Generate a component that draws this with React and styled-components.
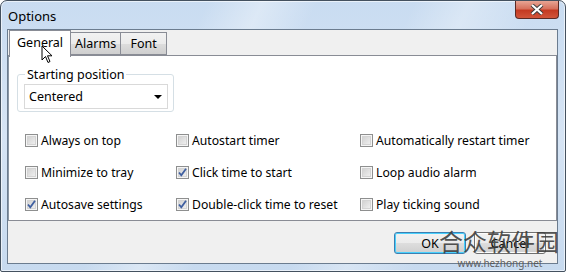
import React from "react";
import styled, { createGlobalStyle } from "styled-components";

const GlobalStyle = createGlobalStyle`
  html, body {
    margin: 0;
    padding: 0;
    background: #ffffff;
  }
  body {
    font-family: "Noto Sans", "Noto Sans CJK SC", sans-serif;
  }
`;

const Frame = styled.div`
  position: relative;
  box-sizing: border-box;
  width: 566px;
  height: 272px;
  border: 1px solid #44515f;
  border-radius: 7px 7px 2px 2px;
  background:
    linear-gradient(115deg, rgba(255,255,255,0) 0%, rgba(255,255,255,0) 30%, rgba(255,255,255,0.35) 38%, rgba(255,255,255,0) 46%, rgba(255,255,255,0) 60%, rgba(255,255,255,0.3) 68%, rgba(255,255,255,0) 78%),
    linear-gradient(180deg, #c9dcf1 0%, #d6e4f4 50%, #c7daef 100%);
  box-shadow: inset 0 0 0 1px rgba(255,255,255,0.6);
  padding: 28px 7px 7px 6px;
  display: flex;
  flex-direction: column;
`;

const TitleBar = styled.div`
  position: absolute;
  left: 0;
  right: 0;
  top: 0;
  height: 28px;
  display: flex;
  align-items: flex-start;
  justify-content: space-between;
`;

const Title = styled.div`
  margin: 6px 0 0 7px;
  font-size: 13px;
  color: #000;
`;

const CloseButton = styled.div`
  width: 44px;
  height: 18px;
  margin-right: 6px;
  box-sizing: border-box;
  border: 1px solid #5a2a24;
  border-top: none;
  border-radius: 0 0 4px 4px;
  background: linear-gradient(180deg, #e8a594 0%, #d6715d 45%, #c43a22 55%, #d1553a 100%);
  display: flex;
  align-items: center;
  justify-content: center;
`;

const Client = styled.div`
  flex: 1;
  box-sizing: border-box;
  border: 1px solid #6b7c8f;
  background: #f0f0f0;
  display: flex;
  flex-direction: column;
`;

const TabStrip = styled.div`
  display: flex;
  align-items: flex-end;
  height: 25px;
  padding-left: 1px;
  position: relative;
  z-index: 1;
`;

const Tab = styled.div`
  box-sizing: border-box;
  min-width: 47px;
  text-align: center;
  height: ${(p) => (p.$active ? "27px" : "23px")};
  margin-bottom: ${(p) => (p.$active ? "-2px" : "0")};
  padding: ${(p) => (p.$active ? "3px 7px 0 7px" : "2px 4px 0 4px")};
  border: 1px solid #898c95;
  border-bottom: ${(p) => (p.$active ? "none" : "1px solid #898c95")};
  margin-left: ${(p) => (p.$first ? "0" : "-1px")};
  background: ${(p) =>
    p.$active ? "#ffffff" : "linear-gradient(180deg, #f2f2f2 0%, #ebebeb 50%, #dddddd 51%, #cfcfcf 100%)"};
  font-size: 12.5px;
  color: #000;
  position: relative;
`;

const Panel = styled.div`
  box-sizing: border-box;
  height: 166px;
  border: 1px solid #898c95;
  border-left-color: #8b97a5;
  background: #ffffff;
  padding: 11px 8px 0 8px;
`;

const GroupBox = styled.fieldset`
  box-sizing: border-box;
  width: 157px;
  height: 45px;
  margin: 0;
  padding: 2px 5px 0 6px;
  border: 1px solid #d5dfe5;
  border-radius: 3px;
`;

const Legend = styled.legend`
  padding: 0 2px;
  margin-left: 1px;
  font-size: 12.5px;
  color: #000;
  line-height: 15px;
`;

const Select = styled.div`
  box-sizing: border-box;
  width: 144px;
  height: 25px;
  border: 1px solid #d9d9d9;
  background: #fff;
  display: flex;
  align-items: center;
  justify-content: space-between;
  padding: 0 5px 0 4px;
  font-size: 12.5px;
`;

const Arrow = styled.div`
  width: 0;
  height: 0;
  border-left: 4px solid transparent;
  border-right: 4px solid transparent;
  border-top: 4px solid #000;
`;

const Options = styled.div`
  display: grid;
  grid-template-columns: 151px 184px 1fr;
  grid-auto-rows: 32px;
  padding: 22px 0 0 8px;
`;

const Option = styled.label`
  display: flex;
  align-items: center;
  gap: 3px;
  height: 13px;
  font-size: 12.2px;
  color: #000;
  white-space: nowrap;
`;

const Box = styled.span`
  box-sizing: border-box;
  width: 13px;
  height: 13px;
  border: 1px solid #8e8f8f;
  box-shadow: inset 0 0 0 1px #f5f5f5, inset 0 0 0 2px #d4d4d4;
  background-image: linear-gradient(135deg, #cbcbcb 0%, #f6f6f6 100%);
  position: relative;
  flex: none;
`;

const Footer = styled.div`
  flex: 1;
  display: flex;
  justify-content: flex-end;
  gap: 8px;
  padding: 11px 11px 0 0;
`;

const Button = styled.div`
  box-sizing: border-box;
  width: 72px;
  height: 22px;
  border: 1px solid ${(p) => (p.$focused ? "#3c7fb1" : "#707070")};
  border-radius: 3px;
  background: linear-gradient(180deg, #f2f2f2 0%, #ebebeb 50%, #dddddd 51%, #cfcfcf 100%);
  box-shadow: ${(p) => (p.$focused ? "inset 0 0 0 1px #48d0fd" : "inset 0 0 0 1px #fcfcfc")};
  display: flex;
  align-items: center;
  justify-content: center;
  font-size: 12.5px;
  color: #000;
`;

const Watermark = styled.div`
  position: absolute;
  left: 436px;
  top: 224px;
  width: 124px;
  display: flex;
  flex-direction: column;
  align-items: center;
  white-space: nowrap;
  color: rgba(60, 60, 60, 0.9);
  pointer-events: none;
  z-index: 2;
`;

const WatermarkBig = styled.div`
  font-family: "Noto Sans CJK SC", sans-serif;
  font-size: 24px;
  line-height: 32px;
`;

const WatermarkSmall = styled.div`
  font-family: "Noto Sans", sans-serif;
  font-size: 10px;
  line-height: 12px;
  margin-left: 2px;
  color: rgba(80, 80, 80, 0.9);
`;

const Cursor = styled.svg`
  position: absolute;
  left: 40px;
  top: 44px;
  z-index: 2;
`;

const Check = () => (
  <svg width="11" height="11" viewBox="0 0 11 11" style={{ position: "absolute", left: 0, top: 0 }}>
    <path d="M2 5.5 L4.3 8.3 L9 1.8" fill="none" stroke="#3f5fa0" strokeWidth="1.8" />
  </svg>
);

const CheckBox = ({ checked, children }) => (
  <Option>
    <Box>{checked && <Check />}</Box>
    {children}
  </Option>
);

const rows = [
  ["Always on top", false],
  ["Autostart timer", false],
  ["Automatically restart timer", false],
  ["Minimize to tray", false],
  ["Click time to start", true],
  ["Loop audio alarm", false],
  ["Autosave settings", true],
  ["Double-click time to reset", true],
  ["Play ticking sound", false],
];

export default function App() {
  return (
    <>
      <GlobalStyle />
      <Frame>
        <TitleBar>
          <Title>Options</Title>
          <CloseButton>
            <svg width="14" height="11" viewBox="0 0 14 11">
              <path d="M2 1 L12 10 M12 1 L2 10" stroke="#3b3b3b" strokeWidth="4" />
              <path d="M2 1 L12 10 M12 1 L2 10" stroke="#ffffff" strokeWidth="2.2" />
            </svg>
          </CloseButton>
        </TitleBar>
        <Client>
          <TabStrip>
            <Tab $active $first>General</Tab>
            <Tab>Alarms</Tab>
            <Tab>Font</Tab>
          </TabStrip>
          <Panel>
            <GroupBox>
              <Legend>Starting position</Legend>
              <Select>
                <span>Centered</span>
                <Arrow />
              </Select>
            </GroupBox>
            <Options>
              {rows.map(([label, checked]) => (
                <CheckBox key={label} checked={checked}>
                  {label}
                </CheckBox>
              ))}
            </Options>
          </Panel>
          <Footer>
            <Button $focused>OK</Button>
            <Button>Cancel</Button>
          </Footer>
        </Client>
        <Cursor width="13" height="19" viewBox="0 0 13 19">
          <path d="M1 1 L1 15 L4.5 11.5 L7 17.5 L9 16.5 L6.5 10.8 L11 10.8 Z" fill="#ffffff" stroke="#000" strokeWidth="1" />
        </Cursor>
        <Watermark>
          <WatermarkBig>合众软件园</WatermarkBig>
          <WatermarkSmall>www.hezhong.net</WatermarkSmall>
        </Watermark>
      </Frame>
    </>
  );
}
